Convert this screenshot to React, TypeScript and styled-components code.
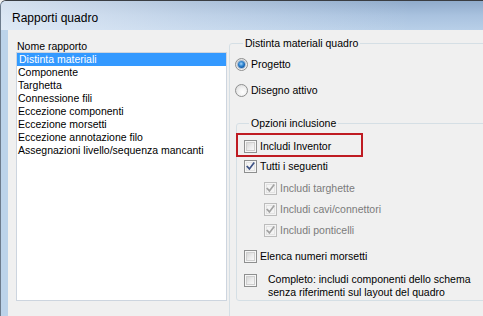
import React from 'react';
import styled, { createGlobalStyle } from 'styled-components';

const Global = createGlobalStyle`
  html, body { margin: 0; padding: 0; overflow: hidden; background: #f0f0f0; }
  body { font-family: "Liberation Sans", Arial, sans-serif; }
  * { box-sizing: border-box; }
`;

const Window = styled.div`
  width: 483px;
  height: 316px;
  display: flex;
  flex-direction: column;
  background: #bcd3ea;
  border-top: 1px solid #3a3d42;
  border-left: 1px solid #6d7b8c;
  border-top-left-radius: 6px;
  overflow: hidden;
`;

const TitleBar = styled.div`
  flex: none;
  height: 29px;
  padding: 10px 0 0 11px;
  font-size: 12px;
  line-height: 14px;
  color: #000;
  background:
    linear-gradient(to right, rgba(236, 242, 250, 0.75) 0%, rgba(236, 242, 250, 0.35) 40%, rgba(236, 242, 250, 0) 85%),
    linear-gradient(to bottom, #90abcb 0%, #a9c2df 50%, #b8cfe8 100%);
`;

const Body = styled.div`
  flex: 1;
  display: flex;
  padding-left: 7px;
  min-height: 0;
  overflow: hidden;
`;

const Content = styled.div`
  flex: 1;
  min-width: 0;
  background: #f0f0f0;
  display: grid;
  grid-template-columns: 211px 1fr;
  column-gap: 2px;
  align-items: start;
  padding: 7px 0 0 8px;
  font-size: 10.5px;
  line-height: 13px;
  color: #000;
  overflow: hidden;
`;

const LeftColumn = styled.div`
  margin-top: 3px;
  display: flex;
  flex-direction: column;
`;

const FieldLabel = styled.div`
  line-height: 12px;
  padding-left: 1px;
`;

const ListBox = styled.div`
  height: 249px;
  border: 1px solid #cdd5df;
  background: #fff;
  display: flex;
  flex-direction: column;
`;

const ListItem = styled.div<{ $selected?: boolean }>`
  height: 13px;
  line-height: 13px;
  padding-left: ${p => (p.$selected ? 2 : 1)}px;
  white-space: nowrap;
  background: ${p => (p.$selected ? '#3399ff' : 'transparent')};
  color: ${p => (p.$selected ? '#fff' : '#000')};
`;

const GroupBox = styled.fieldset<{ $ml?: number; $mt?: number; $mr: number; $pb: number; $pl: number }>`
  margin: ${p => p.$mt ?? 0}px ${p => p.$mr}px 0 ${p => p.$ml ?? 0}px;
  padding: 0 0 ${p => p.$pb}px ${p => p.$pl}px;
  min-width: 0;
  border: 1px solid #d5dfe5;
  border-radius: 3px;
  display: flex;
  flex-direction: column;
`;

const Legend = styled.legend<{ $ml: number }>`
  margin-left: ${p => p.$ml}px;
  padding: 0 2px;
  line-height: 13px;
`;

const Row = styled.div<{ $mt: number; $indent?: number; $gap?: number; $disabled?: boolean }>`
  position: relative;
  display: flex;
  align-items: flex-start;
  margin-top: ${p => p.$mt}px;
  padding-left: ${p => p.$indent ?? 0}px;
  column-gap: ${p => p.$gap ?? 3}px;
  line-height: 13px;
  color: ${p => (p.$disabled ? '#7b7b7b' : '#000')};
  white-space: nowrap;
`;

const RadioCircle = styled.span`
  position: relative;
  flex: none;
  width: 13px;
  height: 13px;
  border-radius: 50%;
  border: 1px solid #8e8f8f;
  background: radial-gradient(circle at 60% 65%, #ffffff 0%, #f2f2f2 40%, #d6d6d6 100%);
  display: flex;
  align-items: center;
  justify-content: center;
`;

const RadioDot = styled.span`
  width: 7px;
  height: 7px;
  border-radius: 50%;
  background: radial-gradient(circle at 45% 40%, #a9d6fb 0%, #3c8fd6 35%, #0f5aa8 70%, #0a3d78 100%);
  box-shadow: 0 0 0 1px rgba(40, 90, 150, 0.35);
`;

const CheckSquare = styled.span<{ $disabled?: boolean; $mt?: number }>`
  flex: none;
  width: 13px;
  height: 13px;
  margin-top: ${p => p.$mt ?? 0}px;
  border: 1px solid ${p => (p.$disabled ? '#bcbcbc' : '#8e8f8f')};
  background: ${p => (p.$disabled ? '#f4f4f4' : '#f6f6f6')};
  padding: 1px;
  display: flex;
`;

const CheckInner = styled.span<{ $flat?: boolean }>`
  flex: 1;
  border: 1px solid ${p => (p.$flat ? '#e3e3e3' : '#cfcfcf')};
  background: ${p =>
    p.$flat ? '#f4f4f4' : 'linear-gradient(135deg, #d7d7d7 0%, #ececec 55%, #f8f8f8 100%)'};
  position: relative;
`;

const CheckMark = styled.svg`
  position: absolute;
  left: -2px;
  top: -2px;
  width: 11px;
  height: 11px;
  overflow: visible;
`;

const Highlight = styled.span`
  position: absolute;
  left: -8px;
  top: -7px;
  width: 127px;
  height: 24px;
  border: 2px solid #bf1b22;
  pointer-events: none;
`;

const Text = styled.span``;

const TwoLine = styled.span`
  white-space: nowrap;
`;

function Radio({ checked, label, mt }: { checked?: boolean; label: string; mt: number }) {
  return (
    <Row $mt={mt}>
      <RadioCircle>{checked && <RadioDot />}</RadioCircle>
      <Text>{label}</Text>
    </Row>
  );
}

function Check({
  checked,
  disabled,
  children,
  mt,
  indent,
  gap,
  boxMt,
  highlight,
}: {
  checked?: boolean;
  disabled?: boolean;
  children: React.ReactNode;
  mt: number;
  indent?: number;
  gap?: number;
  boxMt?: number;
  highlight?: boolean;
}) {
  const color = disabled ? '#a3a3a3' : '#3d5285';
  return (
    <Row $mt={mt} $indent={indent} $gap={gap} $disabled={disabled}>
      <CheckSquare $disabled={disabled} $mt={boxMt}>
        <CheckInner $flat={disabled || checked}>
          {checked && (
            <CheckMark viewBox="0 0 11 11">
              <path
                d="M2.3 5.6 L4.4 7.9 L8.7 2.2"
                fill="none"
                stroke={color}
                strokeWidth="1.7"
                strokeLinecap="square"
                strokeLinejoin="miter"
              />
            </CheckMark>
          )}
        </CheckInner>
      </CheckSquare>
      {children}
      {highlight && <Highlight />}
    </Row>
  );
}

const items = [
  'Distinta materiali',
  'Componente',
  'Targhetta',
  'Connessione fili',
  'Eccezione componenti',
  'Eccezione morsetti',
  'Eccezione annotazione filo',
  'Assegnazioni livello/sequenza mancanti',
];

export default function App() {
  return (
    <>
      <Global />
      <Window>
        <TitleBar>Rapporti quadro</TitleBar>
        <Body>
          <Content>
            <LeftColumn>
              <FieldLabel>Nome rapporto</FieldLabel>
              <ListBox>
                {items.map((it, i) => (
                  <ListItem key={it} $selected={i === 0}>
                    {it}
                  </ListItem>
                ))}
              </ListBox>
            </LeftColumn>
            <GroupBox $pl={5} $pb={24} $mr={-12}>
              <Legend $ml={8}>Distinta materiali quadro</Legend>
              <Radio checked label="Progetto" mt={8} />
              <Radio label="Disegno attivo" mt={13} />
              <GroupBox $ml={1} $mt={20} $mr={0} $pl={7} $pb={1}>
                <Legend $ml={5}>Opzioni inclusione</Legend>
                <Check mt={10} highlight>
                  <Text>Includi Inventor</Text>
                </Check>
                <Check mt={7} checked>
                  <Text>Tutti i seguenti</Text>
                </Check>
                <Check mt={9} indent={20} checked disabled>
                  <Text>Includi targhette</Text>
                </Check>
                <Check mt={8} indent={20} checked disabled>
                  <Text>Includi cavi/connettori</Text>
                </Check>
                <Check mt={8} indent={20} checked disabled>
                  <Text>Includi ponticelli</Text>
                </Check>
                <Check mt={13}>
                  <Text>Elenca numeri morsetti</Text>
                </Check>
                <Check mt={10} gap={11} boxMt={1}>
                  <TwoLine>
                    Completo: includi componenti dello schema
                    <br />
                    senza riferimenti sul layout del quadro
                  </TwoLine>
                </Check>
              </GroupBox>
            </GroupBox>
          </Content>
        </Body>
      </Window>
    </>
  );
}
